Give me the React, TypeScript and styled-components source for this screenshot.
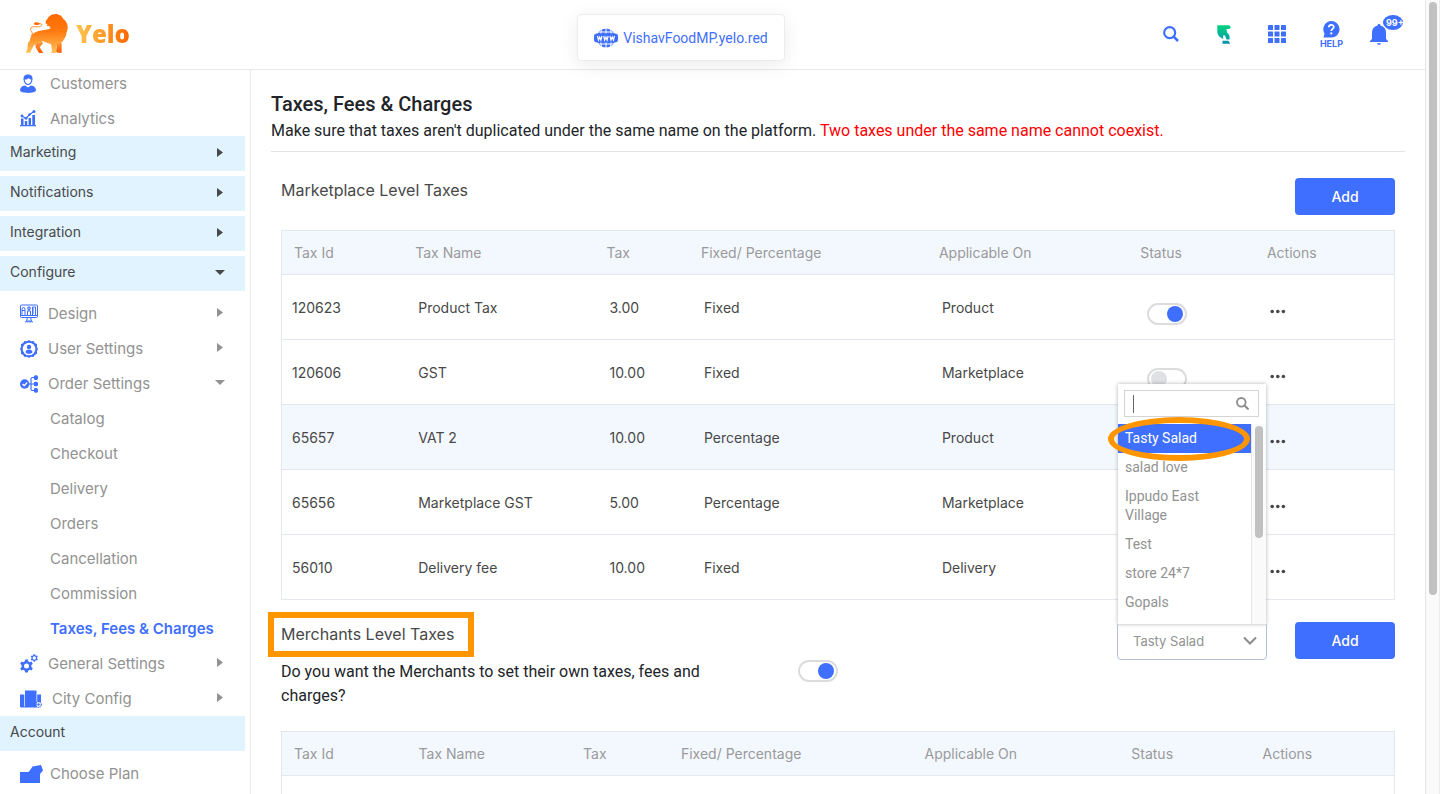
import React, { useState } from "react";
import styled, { createGlobalStyle } from "styled-components";

const BLUE = "#3f6fff";
const ORANGE = "#ff9500";
const LINE = "#e4e7ee";
const SYSTEM = `Roboto, "Liberation Sans", sans-serif`;

const GlobalStyle = createGlobalStyle`
  *, *::before, *::after { box-sizing: border-box; }
  body {
    margin: 0;
    background: #fff;
    color: #212529;
    font-family: Inter, "Liberation Sans", sans-serif;
    font-size: 16px;
    line-height: 24px;
  }
  h1, h2, p, ul { margin: 0; padding: 0; }
  button, input, select { font: inherit; }
  a { text-decoration: none; }
`;

/* ---------- shell ---------- */

const Shell = styled.div`
  display: flex;
  height: 100vh;
  overflow: hidden;
`;

const Page = styled.div`
  flex: 1;
  min-width: 0;
  display: flex;
  flex-direction: column;
`;

const ScrollTrack = styled.div<{ $inset?: boolean }>`
  flex: none;
  width: 15px;
  padding: 2px 3px;
  background: #fafafa;
  border-left: 1px solid #e6e6e6;
  border-right: ${(p) => (p.$inset ? "0" : "1px solid #ececec")};
`;

const ScrollThumb = styled.div<{ $share: number }>`
  height: ${(p) => p.$share}%;
  width: 8px;
  border-radius: 4px;
  background: #c1c1c1;
`;

/* ---------- header ---------- */

const TopBar = styled.header`
  flex: none;
  display: grid;
  grid-template-columns: 1fr auto 1fr;
  align-items: start;
  height: 70px;
  padding: 0 36px 0 25px;
  border-bottom: 1px solid #e8e8ee;
`;

const Brand = styled.a`
  display: flex;
  align-items: center;
  gap: 7px;
  height: 67px;
`;

const BrandName = styled.span`
  font: 800 24px/32px "Open Sans", sans-serif;
  color: transparent;
  background: linear-gradient(90deg, #ffc64f, #ff9a26 50%, #ff6400);
  background-clip: text;
`;

const StoreLink = styled.a`
  display: flex;
  align-items: center;
  gap: 5px;
  height: 47px;
  margin: 14px 0 0 -52px;
  padding: 0 16px;
  background: #fff;
  border: 1px solid #ececec;
  border-radius: 4px;
  box-shadow: 0 4px 20px rgba(0, 0, 0, 0.08);
  color: ${BLUE};
  font-family: ${SYSTEM};
  font-size: 14px;
  line-height: 20px;
`;

const Tools = styled.div`
  display: flex;
  justify-content: flex-end;
  align-items: center;
  gap: 33px;
  height: 68px;
`;

const ToolButton = styled.button<{ $snug?: boolean }>`
  position: relative;
  display: flex;
  flex-direction: column;
  align-items: center;
  min-width: 20px;
  margin-left: ${(p) => (p.$snug ? "-7px" : "0")};
  padding: 0;
  border: 0;
  background: none;
  color: ${BLUE};
  font-size: 9px;
  font-weight: 700;
  line-height: 10px;
`;

const Badge = styled.span`
  position: absolute;
  top: -9px;
  left: 14px;
  width: 20px;
  height: 15px;
  padding-left: 3px;
  overflow: hidden;
  border-radius: 50%;
  background: ${BLUE};
  color: #fff;
  font-size: 9px;
  line-height: 15px;
`;

/* ---------- sidebar ---------- */

const Body = styled.div`
  flex: 1;
  min-height: 0;
  display: flex;
`;

const Sidebar = styled.nav`
  flex: none;
  width: 251px;
  overflow: hidden;
  border-right: 1px solid #ececec;
`;

const SideScroll = styled.div`
  margin-top: -4px;
  padding-right: 5px;
`;

const Group = styled.button`
  display: flex;
  justify-content: space-between;
  align-items: center;
  width: 100%;
  height: 35px;
  margin-bottom: 5px;
  padding: 0 20px 3px 10px;
  border: 0;
  background: #e0f3ff;
  color: #484848;
  font-size: 14px;
  line-height: 20px;
  text-align: left;
`;

const NavLink = styled.a<{ $active?: boolean }>`
  display: flex;
  align-items: center;
  height: 35px;
  padding: 0 20px;
  color: ${(p) => (p.$active ? BLUE : "#929292")};
  font-size: 15px;
  font-weight: ${(p) => (p.$active ? 600 : 400)};
  line-height: 20px;
`;

const SubLink = styled(NavLink)`
  padding-left: 50px;
`;

const IconSlot = styled.span<{ $width: number }>`
  flex: none;
  display: flex;
  width: ${(p) => p.$width}px;
  color: ${BLUE};
`;

const CaretSlot = styled.span`
  display: flex;
  justify-content: center;
  width: 10px;
  margin-left: auto;
`;

const NavCaretSlot = styled(CaretSlot)`
  padding-bottom: 3px;
`;

/* ---------- main ---------- */

const Main = styled.main`
  flex: 1;
  min-width: 0;
  overflow: hidden;
  padding: 22px 20px 0;
`;

const Intro = styled.header`
  padding-bottom: 8px;
  border-bottom: 1px solid #e2e2e2;
  font-family: ${SYSTEM};
`;

const Title = styled.h1`
  font-size: 20px;
  font-weight: 500;
  line-height: 24px;
`;

const Lead = styled.p`
  margin-top: 3px;
  font-size: 16px;
`;

const Warning = styled.span`
  color: #f00;
`;

const Section = styled.section<{ $top: number }>`
  padding: ${(p) => p.$top}px 10px 0;
`;

const SectionHead = styled.div`
  display: flex;
  align-items: flex-start;
  gap: 28px;
`;

const SectionTitle = styled.h2`
  position: relative;
  margin-right: auto;
  color: #484848;
  font-size: 16px;
  font-weight: 400;
`;

const TitleFrame = styled.span`
  position: absolute;
  inset: -10px -20px -11px -13px;
  border: 6px solid ${ORANGE};
`;

const AddButton = styled.button`
  width: 100px;
  height: 37px;
  border: 0;
  border-radius: 4px;
  background: ${BLUE};
  color: #fff;
  font-size: 14px;
  font-weight: 500;
`;

const Question = styled.div`
  display: flex;
  align-items: flex-start;
`;

const QuestionLabel = styled.label`
  width: 42%;
  margin-right: 49px;
  font-family: ${SYSTEM};
`;

const Switch = styled.input`
  display: block;
  appearance: none;
  width: 40px;
  height: 22px;
  margin: 0;
  padding: 1px 2px;
  border: 2px solid #dcdcde;
  border-radius: 11px;
  background: #fff;

  &::before {
    content: "";
    display: block;
    width: 16px;
    height: 16px;
    border-radius: 50%;
    background: #e0e1e4;
  }
  &:checked::before {
    margin-left: auto;
    background: ${BLUE};
  }
`;

/* ---------- table ---------- */

const TableFrame = styled.div<{ $gap: number }>`
  margin-top: ${(p) => p.$gap}px;
  border: 1px solid ${LINE};
`;

const Table = styled.table`
  width: 100%;
  table-layout: fixed;
  border-collapse: separate;
  border-spacing: 0;
  font-size: 14px;
  line-height: 20px;
`;

/* shares are given in thousandths of the table width */
const Col = styled.col<{ $share: number }>`
  width: ${(p) => p.$share / 10}%;
`;

const Th = styled.th`
  height: 44px;
  padding: 0 12px;
  border-bottom: 1px solid ${LINE};
  background: #f3f8ff;
  color: #9a9a9a;
  font-weight: 400;
  text-align: left;
`;

const Row = styled.tr<{ $lit?: boolean }>`
  background: ${(p) => (p.$lit ? "#f3f8ff" : "#fff")};
  &:last-child td { height: 64px; border-bottom: 0; }
`;

const Td = styled.td`
  height: 65px;
  padding: 2px 15px 0;
  border-bottom: 1px solid ${LINE};
  color: #484848;
  &:first-child { padding-left: 10px; }
`;

const SwitchCell = styled(Td)`
  padding: 13px 19px 0;
`;

const ActionCell = styled(Td)`
  padding-top: 8px;
`;

const DotsButton = styled.button`
  display: block;
  padding: 0;
  border: 0;
  background: none;
  color: #484848;
  line-height: 0;
`;

/* ---------- merchant picker ---------- */

const Picker = styled.div`
  position: relative;
  width: 150px;
`;

const PickerChevron = styled.svg`
  position: absolute;
  right: 10px;
  top: 14px;
  pointer-events: none;
`;

const PickerSelect = styled.select`
  display: block;
  appearance: none;
  width: 100%;
  height: 38px;
  padding: 0 15px;
  border: 1px solid #b5c0d8;
  border-radius: 4px;
  background: #fff;
  color: #929292;
  font-size: 13px;
`;

const Menu = styled.div`
  position: absolute;
  right: 1px;
  bottom: 36px;
  left: 1px;
  background: #fff;
  box-shadow: 0 0 4px rgba(0, 0, 0, 0.3);
  font-family: ${SYSTEM};
`;

const MenuSearch = styled.div`
  position: relative;
  padding: 6px 7px 7px 6px;
`;

const SearchInput = styled.input`
  display: block;
  width: 100%;
  height: 27px;
  padding: 0 30px 0 8px;
  border: 1px solid #d4d4d4;
  outline: 0;
  background: #fff;
`;

const Cursor = styled.span`
  position: absolute;
  top: 11px;
  left: 15px;
  width: 1px;
  height: 18px;
  background: #666;
`;

const SearchGlyph = styled.svg`
  position: absolute;
  top: 13px;
  right: 17px;
`;

const MenuBody = styled.div`
  display: flex;
  height: 200px;
`;

const Options = styled.ul`
  flex: 1;
  overflow: hidden;
  list-style: none;
`;

const Option = styled.li<{ $selected?: boolean }>`
  padding: 5px 20px 5px 7px;
  background: ${(p) => (p.$selected ? BLUE : "#fff")};
  color: ${(p) => (p.$selected ? "#fff" : "#929292")};
  font-size: 14px;
  line-height: 19px;
`;

const Ring = styled.span`
  position: absolute;
  top: 33px;
  left: -10px;
  width: 142px;
  height: 44px;
  border: 6px solid ${ORANGE};
  border-radius: 50%;
`;

/* ---------- drawings ---------- */

const Lion = () => (
  <svg width="44" height="42" viewBox="16 12 132 126" aria-hidden="true">
    <defs>
      <linearGradient id="mane" x1="0" y1="0" x2="0" y2="1">
        <stop offset="0" stopColor="#ff6a00" />
        <stop offset="0.45" stopColor="#ff7a10" />
        <stop offset="1" stopColor="#ffc45c" />
      </linearGradient>
      <linearGradient id="legs" x1="0" y1="0" x2="0" y2="1">
        <stop offset="0" stopColor="#ff9a3c" />
        <stop offset="1" stopColor="#ff5a00" />
      </linearGradient>
    </defs>
    <path d="M47 104l20-6 3 5-10 12 11 17H58L48 115zM112 100l14 2v29h-13l-4-3z" fill="url(#legs)" />
    <path
      d="M78 43c-1-6 1-10 5-12 2-9 12-15 24-16 13 0 20 7 24 15 8 6 13 14 13 24 0 9-2 13-4 19-1 10-5 15-8 19-2 6-7 8-11 11l-9 4-2 9v12l-2 4H94l3-6-3-21c-9-2-16-5-24-9-9 4-18 6-24 10-6 6-9 14-13 21l1 4H18l5-11 2-18c2-3 5-5 6-9 2-16 13-25 29-28 13-2 24-2 33-7l-5-8-4 2-3-3 3-2z"
      fill="url(#mane)"
    />
    <path
      d="M34 81c5-3 5-8 2-13-4-4-5-11 1-14 9-3 23 3 29-5 2-4-4-6-10-5"
      fill="none"
      stroke="#ff8b2a"
      strokeWidth="3"
    />
    <path d="M42 44c3-5 9-5 14-3l5 3-4 3c-5 2-11 2-15-3z" fill="#ff6a10" />
  </svg>
);

const Globe = () => (
  <svg width="24" height="20" viewBox="0 0 24 20" aria-hidden="true">
    <circle cx="12" cy="10" r="9.5" fill={BLUE} />
    <path d="M12 0v20M8 0c-2 6-2 14 0 20M16 0c2 6 2 14 0 20M4 4h16M4 16h16" stroke="#fff" strokeWidth="1" fill="none" />
    <rect x="0" y="5.500" width="24" height="9" rx="3" fill={BLUE} />
    <path
      d="M3.500 8l1 4 1.200-3 1.200 3 1-4M9.700 8l1 4 1.200-3 1.200 3 1-4M16 8l1 4 1.200-3 1.200 3 1-4"
      stroke="#fff"
      strokeWidth="1.200"
      fill="none"
    />
  </svg>
);

const Magnifier = () => (
  <svg width="16" height="16" viewBox="0 0 16 16" fill="none" stroke={BLUE} aria-hidden="true">
    <circle cx="6.700" cy="6.700" r="5.500" strokeWidth="2.200" />
    <path d="M10.700 10.700L15 15" strokeWidth="2.600" />
  </svg>
);

const GreenMark = () => (
  <svg width="14" height="19" viewBox="0 0 14 19" aria-hidden="true">
    <defs>
      <linearGradient id="green" gradientUnits="userSpaceOnUse" x1="0" y1="0" x2="0" y2="19">
        <stop offset="0" stopColor="#04d47c" />
        <stop offset="1" stopColor="#0590b0" />
      </linearGradient>
    </defs>
    <path
      d="M.3.300H12l2 1.800-1.500 1.900H9.500l.5 3.500c2.500 2 3 4.500 2.500 7H9.500l-1.500-4-2 0 .300 3.500C3 12.500.5 10 .3 7.500zM5.500 15.800h6l1.700 2.900H5.500z"
      fill="url(#green)"
    />
  </svg>
);

const Grid = () => (
  <svg width="18" height="18" viewBox="0 0 18 18" fill={BLUE} aria-hidden="true">
    {[0, 6.5, 13].map((y) => [0, 6.5, 13].map((x) => <rect key={`${x}-${y}`} x={x} y={y} width="5" height="5" rx="0.500" />))}
  </svg>
);

const Help = () => (
  <svg width="18" height="19" viewBox="0 0 18 19" aria-hidden="true">
    <path d="M9.300 1a8.300 8.300 0 1 1 0 16.600H1.500l1-4A8.300 8.300 0 0 1 9.300 1z" fill={BLUE} />
    <path d="M6.800 7.200c.2-3.200 5-3 5-.3 0 1.900-2.500 2-2.500 4.100" stroke="#fff" strokeWidth="1.700" fill="none" />
    <circle cx="9.300" cy="13.400" r="1.100" fill="#fff" />
  </svg>
);

const Bell = () => (
  <svg width="18" height="21" viewBox="0 0 18 21" fill={BLUE} aria-hidden="true">
    <path d="M9 0c1 0 1.500.7 1.500 1.600C14 2.400 16 5 16 8.500V15l2 2v1H0v-1l2-2V8.500C2 5 4 2.400 7.500 1.600 7.500.7 8 0 9 0zM7 19.200h4c-.3 2.200-3.700 2.200-4 0z" />
  </svg>
);

const Caret = ({ down }: { down?: boolean }) =>
  down ? (
    <svg width="10" height="5" viewBox="0 0 10 5" fill="currentColor" aria-hidden="true">
      <path d="M0 0h10L5 5z" />
    </svg>
  ) : (
    <svg width="6" height="9" viewBox="0 0 6 9" fill="currentColor" aria-hidden="true">
      <path d="M0 0l6 4.500L0 9z" />
    </svg>
  );

const CustomerIcon = () => (
  <svg width="16" height="19" viewBox="0 0 16 19" aria-hidden="true">
    <path d="M3.500 5.500C3.300 2 5 .5 8 .5s4.700 1.500 4.500 5C12.300 9 10.500 11 8 11S3.700 9 3.500 5.500z" fill={BLUE} />
    <path d="M4.700 5.600c2 0 3-.6 4-1.600.6.900 1.500 1.500 2.600 1.600C11.200 8 10 9.900 8 9.900S4.800 8 4.700 5.600z" fill="#fff" />
    <path d="M5 11.500l3 2 3-2c3 .6 5 2 5 4.800 0 3.500-16 3.500-16 0 0-2.800 2-4.200 5-4.800z" fill={BLUE} />
  </svg>
);

const AnalyticsIcon = () => (
  <svg width="16" height="17" viewBox="0 0 16 17" fill={BLUE} aria-hidden="true">
    <path d="M0 15h16v1.300H0zM1 8.500h2.500V15H1zM4.800 11h2.400v4H4.800zM8.600 8H11v7H8.600zM12.300 5H15v10h-2.700z" />
    <path d="M2 6l4 2.500 3.500-4L14 1.500" fill="none" stroke={BLUE} strokeWidth="1.200" />
    <circle cx="2" cy="6" r="1.400" />
    <circle cx="6" cy="8.300" r="1.400" />
    <circle cx="9.500" cy="4.600" r="1.300" />
    <circle cx="14" cy="1.600" r="1.500" />
  </svg>
);

const DesignIcon = () => (
  <svg width="18" height="19" viewBox="0 0 18 19" fill="none" stroke={BLUE} strokeWidth="1" aria-hidden="true">
    <rect x="0.500" y="1" width="17" height="12.500" rx="1" />
    <path d="M2 11.500V5l1.500-2L5 5v6.500zM2 6.500h3M7.500 11.500V7h3v4.500M9 3v4M12.500 3h3v8.500h-3zM12.500 5h1.500M12.500 7h1.500M12.500 9h1.500M0 11.500h18M7.500 13.500L6.500 17h5l-1-3.500M5 17.800h8" />
    <circle cx="9" cy="4.300" r="1.500" />
  </svg>
);

const UserGearIcon = () => (
  <svg width="18" height="18" viewBox="0 0 18 18" aria-hidden="true">
    <path d="M9 0l2 1.300 2.500-.4 1.300 2.200 2.300 1.100-.2 2.500L18 9l-1.100 2.300.2 2.500-2.300 1.100-1.300 2.200-2.500-.4L9 18l-2-1.300-2.500.4-1.300-2.200-2.300-1.100.2-2.500L0 9l1.100-2.300-.2-2.500 2.300-1.100L4.500.9l2.500.4z" fill={BLUE} />
    <circle cx="9" cy="9" r="6.300" fill="#fff" />
    <circle cx="9" cy="6.900" r="2.200" fill={BLUE} />
    <path d="M5.500 12.200c0-3.600 7-3.600 7 0-1.600 2-5.400 2-7 0z" fill={BLUE} />
  </svg>
);

const OrderIcon = () => (
  <svg width="18" height="18" viewBox="0 0 18 18" fill={BLUE} aria-hidden="true">
    <path d="M9 9h6M16 2.500h-3.500a1.500 1.500 0 0 0-1.500 1.500v10a1.500 1.500 0 0 0 1.500 1.500H16" fill="none" stroke={BLUE} strokeWidth="1.200" />
    <circle cx="4.700" cy="9" r="4.700" />
    <path d="M2.500 9l1.700 1.700L7.200 7.500" fill="none" stroke="#fff" strokeWidth="1.300" />
    <rect x="13.800" y="0.300" width="4.200" height="4.600" rx="1.600" />
    <rect x="13.800" y="6.700" width="4.200" height="4.600" rx="1.600" />
    <rect x="13.800" y="13.100" width="4.200" height="4.600" rx="1.600" />
  </svg>
);

const gearPath =
  "M-1.300-6.500h2.600l.4 1.800 1.500.9 1.800-.6 1.300 2.200-1.400 1.300v1.800l1.400 1.300-1.300 2.200-1.800-.6-1.500.9-.4 1.800h-2.600l-.4-1.800-1.500-.9-1.800.6-1.300-2.200 1.400-1.300v-1.800l-1.400-1.300 1.300-2.200 1.800.6 1.500-.9z";

const GearsIcon = () => (
  <svg width="18" height="19" viewBox="0 0 18 19" fill={BLUE} aria-hidden="true">
    <g transform="translate(6.500 12)">
      <path d={gearPath} />
      <circle r="2.500" fill="#fff" />
    </g>
    <g transform="translate(14.300 4) scale(.56)">
      <path d={gearPath} />
      <circle r="3" fill="#fff" />
    </g>
  </svg>
);

const CityIcon = () => (
  <svg width="22" height="18" viewBox="0 0 22 18" fill={BLUE} aria-hidden="true">
    <path d="M5 .5h11.500V17H5zM0 4.500h4.300V17H0zM17.200 4.500H21V12h-3.800z" />
    <path d="M.8 17h16" stroke={BLUE} />
    <circle cx="18.500" cy="14.500" r="2.800" fill="none" stroke={BLUE} strokeWidth="1.200" strokeDasharray="1.200 .8" />
    <circle cx="18.500" cy="14.500" r="1.200" />
  </svg>
);

const PlanIcon = () => (
  <svg width="23" height="18" viewBox="0 0 23 18" fill={BLUE} aria-hidden="true">
    <path d="M0 7h8l1.500-1 3-4.500L21 0l2 5.500-3 3.500V18H0z" />
  </svg>
);

const Dots = () => (
  <svg width="16" height="5" viewBox="0 0 16 5" fill="currentColor" aria-hidden="true">
    <circle cx="2.200" cy="2.500" r="1.800" />
    <circle cx="7.800" cy="2.500" r="1.800" />
    <circle cx="13.400" cy="2.500" r="1.800" />
  </svg>
);

/* ---------- data ---------- */

const headings = ["Tax Id", "Tax Name", "Tax", "Fixed/ Percentage", "Applicable On", "Status", "Actions"];

const taxes = [
  { id: "120623", name: "Product Tax", tax: "3.00", kind: "Fixed", on: "Product", active: true },
  { id: "120606", name: "GST", tax: "10.00", kind: "Fixed", on: "Marketplace", active: false },
  { id: "65657", name: "VAT 2", tax: "10.00", kind: "Percentage", on: "Product", active: true, lit: true },
  { id: "65656", name: "Marketplace GST", tax: "5.00", kind: "Percentage", on: "Marketplace", active: true },
  { id: "56010", name: "Delivery fee", tax: "10.00", kind: "Fixed", on: "Delivery", active: true },
];

const merchants = ["Tasty Salad", "salad love", "Ippudo East Village", "Test", "store 24*7", "Gopals"];

const orderPages = ["Catalog", "Checkout", "Delivery", "Orders", "Cancellation", "Commission", "Taxes, Fees & Charges"];

/* ---------- parts ---------- */

type NavItemProps = { icon: React.ReactNode; slot: number; label: string; caret?: "right" | "down" };

const NavItem = ({ icon, slot, label, caret }: NavItemProps) => (
  <NavLink href="#">
    <IconSlot $width={slot}>{icon}</IconSlot>
    {label}
    {caret && (
      <NavCaretSlot>
        <Caret down={caret === "down"} />
      </NavCaretSlot>
    )}
  </NavLink>
);

const NavGroup = ({ label, caret }: { label: string; caret?: "right" | "down" }) => (
  <Group type="button">
    {label}
    {caret && (
      <CaretSlot>
        <Caret down={caret === "down"} />
      </CaretSlot>
    )}
  </Group>
);

const TableHead = ({ shares }: { shares: number[] }) => (
  <>
    <colgroup>
      {shares.map((share, i) => (
        <Col key={i} $share={share} />
      ))}
    </colgroup>
    <thead>
      <tr>
        {headings.map((h) => (
          <Th key={h} scope="col">{h}</Th>
        ))}
      </tr>
    </thead>
  </>
);

export default function App() {
  const [merchant, setMerchant] = useState(merchants[0]);

  return (
    <Shell>
      <GlobalStyle />
      <Page>
        <TopBar>
          <Brand href="#" aria-label="Yelo">
            <Lion />
            <BrandName>Yelo</BrandName>
          </Brand>
          <StoreLink href="#">
            <Globe />
            VishavFoodMP.yelo.red
          </StoreLink>
          <Tools>
            <ToolButton type="button" aria-label="Search"><Magnifier /></ToolButton>
            <ToolButton type="button" aria-label="Switch product"><GreenMark /></ToolButton>
            <ToolButton type="button" aria-label="Apps"><Grid /></ToolButton>
            <ToolButton type="button">
              <Help />
              HELP
            </ToolButton>
            <ToolButton type="button" aria-label="Notifications" $snug>
              <Bell />
              <Badge>99+</Badge>
            </ToolButton>
          </Tools>
        </TopBar>

        <Body>
          <Sidebar>
            <SideScroll>
              <NavItem icon={<CustomerIcon />} slot={30} label="Customers" />
              <NavItem icon={<AnalyticsIcon />} slot={30} label="Analytics" />
              <NavGroup label="Marketing" caret="right" />
              <NavGroup label="Notifications" caret="right" />
              <NavGroup label="Integration" caret="right" />
              <NavGroup label="Configure" caret="down" />
              <NavItem icon={<DesignIcon />} slot={28} label="Design" caret="right" />
              <NavItem icon={<UserGearIcon />} slot={28} label="User Settings" caret="right" />
              <NavItem icon={<OrderIcon />} slot={28} label="Order Settings" caret="down" />
              {orderPages.map((page) => (
                <SubLink key={page} href="#" $active={page === "Taxes, Fees & Charges"}>
                  {page}
                </SubLink>
              ))}
              <NavItem icon={<GearsIcon />} slot={28} label="General Settings" caret="right" />
              <NavItem icon={<CityIcon />} slot={32} label="City Config" caret="right" />
              <NavGroup label="Account" />
              <NavItem icon={<PlanIcon />} slot={30} label="Choose Plan" />
            </SideScroll>
          </Sidebar>

          <Main>
            <Intro>
              <Title>Taxes, Fees &amp; Charges</Title>
              <Lead>
                Make sure that taxes aren't duplicated under the same name on the platform.{" "}
                <Warning>Two taxes under the same name cannot coexist.</Warning>
              </Lead>
            </Intro>

            <Section $top={26}>
              <SectionHead>
                <SectionTitle>Marketplace Level Taxes</SectionTitle>
                <AddButton type="button">Add</AddButton>
              </SectionHead>
              <TableFrame $gap={15}>
                <Table>
                  <TableHead shares={[109, 172, 85, 214, 181, 114, 125]} />
                  <tbody>
                    {taxes.map((t) => (
                      <Row key={t.id} $lit={t.lit}>
                        <Td>{t.id}</Td>
                        <Td>{t.name}</Td>
                        <Td>{t.tax}</Td>
                        <Td>{t.kind}</Td>
                        <Td>{t.on}</Td>
                        <SwitchCell>
                          <Switch type="checkbox" role="switch" defaultChecked={t.active} aria-label={`Status of ${t.name}`} />
                        </SwitchCell>
                        <ActionCell>
                          <DotsButton type="button" aria-label={`Actions for ${t.name}`}><Dots /></DotsButton>
                        </ActionCell>
                      </Row>
                    ))}
                  </tbody>
                </Table>
              </TableFrame>
            </Section>

            <Section $top={22}>
              <SectionHead>
                <SectionTitle>
                  Merchants Level Taxes
                  <TitleFrame />
                </SectionTitle>
                <Picker>
                  <PickerSelect aria-label="Merchant" value={merchant} onChange={(e) => setMerchant(e.target.value)}>
                    {merchants.map((m) => (
                      <option key={m}>{m}</option>
                    ))}
                  </PickerSelect>
                  <PickerChevron width="14" height="10" viewBox="0 0 14 10" fill="none" stroke="#8c8c8c" strokeWidth="2">
                    <path d="M1 1.500l6 6 6-6" />
                  </PickerChevron>
                  <Menu>
                    <MenuSearch>
                      <SearchInput type="text" aria-label="Search merchants" />
                      <Cursor />
                      <SearchGlyph width="13" height="13" viewBox="0 0 13 13" fill="none" stroke="#8c8c8c">
                        <circle cx="5.300" cy="5.300" r="4.300" strokeWidth="1.800" />
                        <path d="M8.500 8.500l4 4" strokeWidth="2" />
                      </SearchGlyph>
                    </MenuSearch>
                    <MenuBody>
                      <Options role="listbox" aria-label="Merchants">
                        {merchants.map((m) => (
                          <Option key={m} role="option" aria-selected={m === merchant} $selected={m === merchant} onClick={() => setMerchant(m)}>
                            {m}
                          </Option>
                        ))}
                      </Options>
                      <ScrollTrack $inset>
                        <ScrollThumb $share={57} />
                      </ScrollTrack>
                    </MenuBody>
                    <Ring />
                  </Menu>
                </Picker>
                <AddButton type="button">Add</AddButton>
              </SectionHead>
              <Question>
                <QuestionLabel htmlFor="merchant-taxes">
                  Do you want the Merchants to set their own taxes, fees and charges?
                </QuestionLabel>
                <Switch id="merchant-taxes" type="checkbox" role="switch" defaultChecked />
              </Question>
              <TableFrame $gap={23}>
                <Table>
                  <TableHead shares={[112, 148, 88, 219, 186, 118, 129]} />
                  <tbody>
                    <Row>
                      <Td colSpan={7} />
                    </Row>
                  </tbody>
                </Table>
              </TableFrame>
            </Section>
          </Main>
        </Body>
      </Page>
      <ScrollTrack>
        <ScrollThumb $share={75} />
      </ScrollTrack>
    </Shell>
  );
}
